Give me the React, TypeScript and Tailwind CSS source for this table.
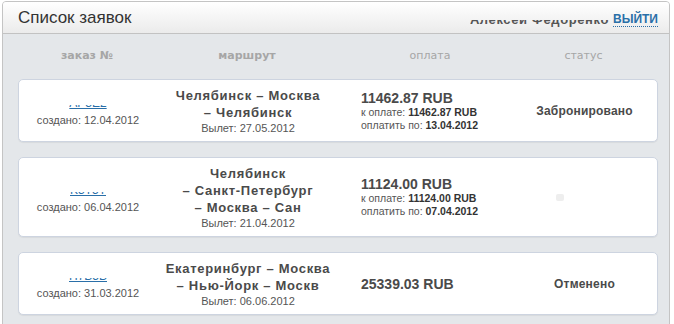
import React from "react";

type Order = {
  num: string;
  created: string;
  route: string[];
  departure: string;
  price: string;
  toPay?: string;
  payBy?: string;
  status?: string;
  pending?: boolean;
};

const orders: Order[] = [
  {
    num: "AP3E2",
    created: "12.04.2012",
    route: ["Челябинск – Москва", "– Челябинск"],
    departure: "27.05.2012",
    price: "11462.87 RUB",
    toPay: "11462.87 RUB",
    payBy: "13.04.2012",
    status: "Забронировано",
  },
  {
    num: "K3T5T",
    created: "06.04.2012",
    route: ["Челябинск", "– Санкт-Петербург", "– Москва – Сан"],
    departure: "21.04.2012",
    price: "11124.00 RUB",
    toPay: "11124.00 RUB",
    payBy: "07.04.2012",
    pending: true,
  },
  {
    num: "H7B5B",
    created: "31.03.2012",
    route: ["Екатеринбург – Москва", "– Нью-Йорк – Москв"],
    departure: "06.06.2012",
    price: "25339.03 RUB",
    status: "Отменено",
  },
];

const cols = "grid grid-cols-[138px_182px_184px_123px]";

const OrderCard: React.FC<{ o: Order }> = ({ o }) => {
  return (
    <div
      className={`${cols} items-center w-[640px] bg-white border border-[#cdd4e0] rounded-[5px] shadow-[0_1px_1px_rgba(0,0,0,0.06)] ${
        o.route.length > 2 ? "h-[80px]" : "h-[63px]"
      }`}
    >
      <div className="flex flex-col items-center pt-[11px]">
        {/* номер заказа обрезан сверху, видна только нижняя часть */}
        <div className="h-[5px] overflow-hidden flex flex-col justify-end">
          <span className="text-[12px] leading-[14px] text-[#2a6fa8] underline underline-offset-1">
            {o.num}
          </span>
        </div>
        <div className="text-[11px] leading-[14px] text-[#555] mt-[3px]">создано: {o.created}</div>
      </div>

      <div className="flex flex-col items-center text-center pt-[2px]">
        {o.route.map((r) => (
          <div key={r} className="text-[13px] leading-[17px] font-bold text-[#4a4a4a] tracking-[0.7px]">
            {r}
          </div>
        ))}
        <div className="text-[11px] leading-[15px] text-[#555]">Вылет: {o.departure}</div>
      </div>

      <div className="pl-[22px] flex flex-col">
        <div className="text-[14px] leading-[16px] font-bold text-[#4a4a4a]">{o.price}</div>
        {o.toPay && (
          <div className="text-[10.5px] leading-[13px] text-[#555]">
            к оплате: <b className="text-[#333]">{o.toPay}</b>
          </div>
        )}
        {o.payBy && (
          <div className="text-[10.5px] leading-[13px] text-[#555]">
            оплатить по: <b className="text-[#333]">{o.payBy}</b>
          </div>
        )}
      </div>

      <div className="flex justify-center">
        {o.status ? (
          <span className="text-[12px] font-bold text-[#4a4a4a] tracking-[0.2px]">{o.status}</span>
        ) : o.pending ? (
          <span className="w-[8px] h-[7px] bg-[#eeeeee] rounded-[2px] -ml-[50px]" />
        ) : null}
      </div>
    </div>
  );
};

const App: React.FC = () => {
  return (
    <div className="bg-white min-h-screen pl-[2px] pt-[1px]" style={{ fontFamily: '"Liberation Sans", Arial, sans-serif' }}>
      <div className="w-[668px] min-h-[340px] bg-[#e4e7ea] border border-[#c4c4c4] rounded-t-[4px] overflow-hidden">
        <div className="h-[32px] flex items-center justify-between pl-[15px] pr-[11px] bg-gradient-to-b from-white to-[#ebebeb] border-b border-[#c2c2c2]">
          <span className="text-[17px] text-[#333]">Список заявок</span>
          <div className="flex items-end gap-[4px] mt-[4px]">
            <div className="h-[7px] overflow-hidden flex flex-col justify-end">
              <span className="text-[13px] leading-[15px] font-bold text-[#555] tracking-[0.6px]">
                Алексей Федоренко
              </span>
            </div>
            <span className="text-[12px] leading-[13px] font-bold text-[#2a6fa8] border-b border-dotted border-[#2a6fa8]">
              ВЫЙТИ
            </span>
          </div>
        </div>

        <div className="pl-[15px]">
          <div
            className={`${cols} h-[45px] items-center text-center text-[11px] text-[#a6a6a6]`}
            style={{ fontFamily: '"DejaVu Sans", Verdana, sans-serif' }}
          >
            <span className="font-bold">заказ №</span>
            <span className="font-bold">маршрут</span>
            <span>оплата</span>
            <span>статус</span>
          </div>

          <div className="flex flex-col gap-[15px]">
            {orders.map((o) => (
              <OrderCard key={o.num} o={o} />
            ))}
          </div>
        </div>
      </div>
    </div>
  );
};

export default App;
